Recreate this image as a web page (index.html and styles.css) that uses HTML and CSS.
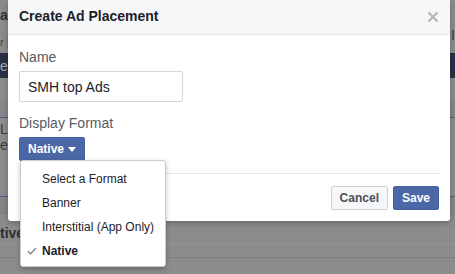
FILE: index.html
```html
<!DOCTYPE html>
<html>
<head>
<meta charset="utf-8">
<link rel="stylesheet" href="styles.css">
</head>
<body>
<div class="backdrop">
  <div class="bg-row bg-top"><span class="bg-text">a</span><span class="bg-mark"></span></div>
  <div class="bg-row bg-sub"><span class="bg-small">r |</span></div>
  <div class="bg-row bg-nav"><span class="bg-nav-text">ea</span></div>
  <div class="bg-row bg-gap"></div>
  <div class="bg-row bg-band"></div>
  <div class="bg-row bg-content"><span class="bg-l">L</span><span class="bg-e">e</span></div>
  <div class="bg-row bg-band2"></div>
  <div class="bg-row bg-native"><span class="bg-native-text">tive</span></div>
  <div class="bg-row bg-last"></div>
</div>

<div class="dialog">
  <div class="dialog-header">
    <span class="dialog-title">Create Ad Placement</span>
    <svg class="close" width="10" height="10" viewBox="0 0 10 10"><path d="M1 1 L9 9 M9 1 L1 9" stroke="#b4b6ba" stroke-width="2" stroke-linecap="square"/></svg>
  </div>
  <div class="dialog-body">
    <div class="field">
      <div class="label">Name</div>
      <div class="input">SMH top Ads</div>
    </div>
    <div class="field">
      <div class="label">Display Format</div>
      <div class="select-wrap">
        <div class="btn-select">Native <span class="caret"></span></div>
        <div class="menu">
          <div class="menu-item">Select a Format</div>
          <div class="menu-item">Banner</div>
          <div class="menu-item">Interstitial (App Only)</div>
          <div class="menu-item selected">
            <svg class="check" width="10" height="8" viewBox="0 0 10 8"><path d="M1 4.2 L3.6 6.8 L9 1" fill="none" stroke="#8d9096" stroke-width="1.6"/></svg>
            Native
          </div>
        </div>
      </div>
    </div>
  </div>
  <div class="dialog-footer">
    <div class="btn btn-cancel">Cancel</div>
    <div class="btn btn-save">Save</div>
  </div>
</div>
</body>
</html>
```
FILE: styles.css
```css
html, body {
  margin: 0;
  padding: 0;
}
body {
  width: 455px;
  height: 274px;
  overflow: hidden;
  background: #8c8c8c;
  font-family: "Liberation Sans", Arial, Helvetica, sans-serif;
  position: relative;
}
.backdrop {
  display: flex;
  flex-direction: column;
}
.bg-row {
  position: relative;
  display: flex;
  align-items: center;
}
.bg-top {
  height: 30px;
  justify-content: space-between;
}
.bg-text {
  font-size: 14px;
  font-weight: bold;
  color: #333;
  margin-left: 0;
}
.bg-mark {
  width: 2px;
  height: 10px;
  background: #555;
  margin-right: 1px;
  margin-top: 40px;
}
.bg-sub {
  height: 23px;
}
.bg-small {
  font-size: 11px;
  color: #444;
  margin-left: 0;
}
.bg-nav {
  height: 25px;
  background: #2a3044;
}
.bg-nav-text {
  font-size: 14px;
  color: #a4a8b4;
  margin-left: 0;
}
.bg-gap {
  height: 22px;
}
.bg-band {
  height: 17px;
  background: #878787;
  border-bottom: 1px solid #4e5f8c;
}
.bg-content {
  height: 78px;
  flex-direction: column;
  align-items: flex-start;
  border-bottom: 1px solid #4e5f8c;
}
.bg-l {
  font-size: 14px;
  color: #3a3a3a;
  margin-top: 3px;
}
.bg-e {
  font-size: 14px;
  color: #3a3a3a;
}
.bg-band2 {
  height: 18px;
  background: #858585;
}
.bg-native {
  height: 28px;
  border-bottom: 1px dotted #9a9a9a;
}
.bg-native-text {
  font-size: 14px;
  font-weight: bold;
  color: #2f2f2f;
  margin-left: 0;
  margin-top: 8px;
}
.bg-last {
  height: 13px;
  border-bottom: 1px solid #808080;
}

.dialog {
  position: absolute;
  left: 8px;
  top: 0;
  width: 442px;
  background: #fff;
  border-radius: 0 0 3px 3px;
  box-shadow: 0 2px 6px rgba(0, 0, 0, 0.25);
}
.dialog-header {
  height: 35px;
  box-sizing: border-box;
  background: #f6f7f9;
  border-bottom: 1px solid #e5e5e5;
  display: flex;
  align-items: center;
  justify-content: space-between;
  padding: 0 12px 3px 11px;
}
.dialog-title {
  font-size: 14px;
  font-weight: bold;
  color: #1d2129;
}
.close {
  display: block;
  margin-top: 2px;
}
.dialog-body {
  padding: 12px 11px 12px 11px;
  display: flex;
  flex-direction: column;
  gap: 11px;
}
.label {
  font-size: 14px;
  line-height: 20px;
  color: #575b63;
  margin-bottom: 4px;
}
.input {
  width: 164px;
  height: 31px;
  box-sizing: border-box;
  border: 1px solid #d3d6db;
  border-radius: 2px;
  padding: 0 8px;
  font-size: 14px;
  line-height: 30px;
  color: #1d2129;
}
.select-wrap {
  position: relative;
  display: flex;
}
.btn-select {
  height: 24px;
  box-sizing: border-box;
  padding: 0 8px;
  background: #4b67a5;
  border: 1px solid #4562a0;
  border-radius: 2px;
  color: #fff;
  font-size: 12px;
  font-weight: bold;
  line-height: 22px;
  display: flex;
  align-items: center;
  gap: 4px;
}
.caret {
  width: 0;
  height: 0;
  border-left: 4px solid transparent;
  border-right: 4px solid transparent;
  border-top: 5px solid #fff;
  margin-top: 1px;
}
.menu {
  position: absolute;
  left: 1px;
  top: 23px;
  width: 146px;
  box-sizing: border-box;
  background: #fff;
  border: 1px solid #c9ccd1;
  border-radius: 3px;
  box-shadow: 0 2px 5px rgba(0, 0, 0, 0.25);
  padding: 6px 0 3px;
  z-index: 2;
}
.menu-item {
  height: 24px;
  line-height: 25px;
  font-size: 12px;
  color: #1d2129;
  padding-left: 21px;
  position: relative;
  white-space: nowrap;
}
.menu-item.selected {
  font-weight: bold;
}
.check {
  position: absolute;
  left: 6px;
  top: 8px;
}
.dialog-footer {
  margin: 0 11px;
  border-top: 1px solid #e5e5e5;
  padding: 12px 0 11px;
  display: flex;
  justify-content: flex-end;
  gap: 5px;
}
.btn {
  height: 24px;
  box-sizing: border-box;
  padding: 0 8px;
  border-radius: 2px;
  font-size: 12px;
  font-weight: bold;
  line-height: 23px;
}
.btn-cancel {
  background: #f6f7f9;
  border: 1px solid #ced0d4;
  color: #4b4f56;
}
.btn-save {
  background: #4b67a5;
  border: 1px solid #4562a0;
  color: #fff;
}
```
